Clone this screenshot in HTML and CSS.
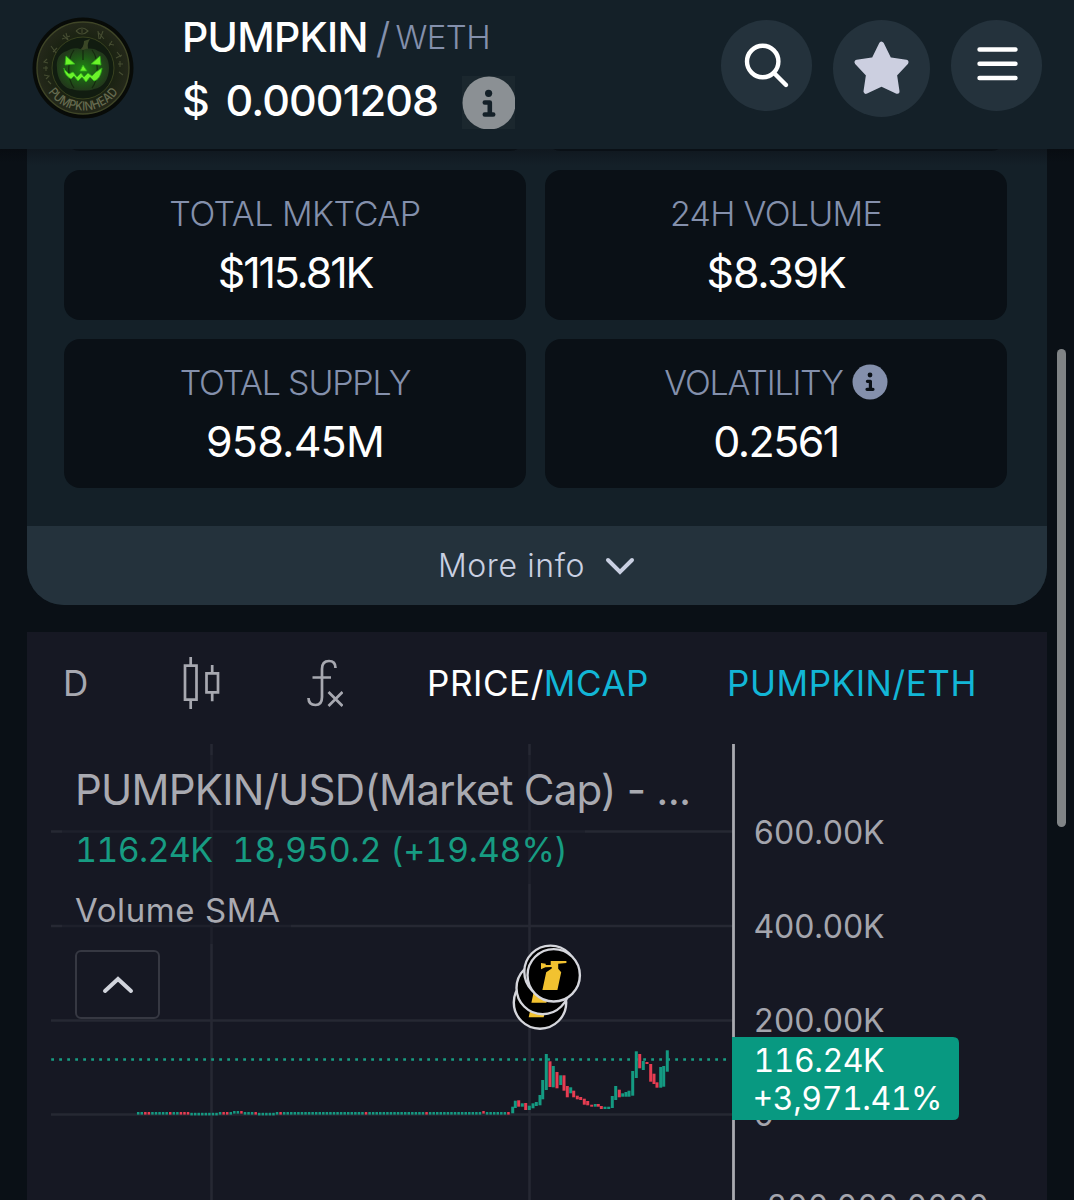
FILE: index.html
```html
<!DOCTYPE html>
<html lang="en">
  <head>
    <meta charset="UTF-8" />
    <meta name="viewport" content="width=device-width, initial-scale=1.0" />
    <title>PUMPKIN / WETH</title>
    <link rel="stylesheet" href="styles.css">
  </head>
  <body>
    <div class="header">
      <svg class="token-logo" viewBox="0 0 102 102">
        <defs>
          <radialGradient id="coin">
            <stop offset="0" stop-color="#1c3a12" />
            <stop offset="0.55" stop-color="#17200f" />
            <stop offset="1" stop-color="#24281a" />
          </radialGradient>
          <radialGradient id="pumpkin">
            <stop offset="0" stop-color="#1f8a12" />
            <stop offset="0.6" stop-color="#1f5717" />
            <stop offset="1" stop-color="#223a1b" />
          </radialGradient>
          <path id="nameArc" d="M13.5 71 A42.500 42.500 0 0 0 88.5 71" />
        </defs>
        <circle cx="51" cy="51" r="50.5" fill="#080b08" />
        <circle cx="51" cy="51" r="46" fill="url(#coin)" stroke="#3f4527" stroke-width="1.4" />
        <circle cx="51" cy="51" r="31" fill="#111c10" stroke="#39421f" stroke-width="1" />
        <g class="runes">
          <path d="M19 29l5 7M21 35l4-4M31 18l5 5M30 22l8-3M34 16l2 7M44 14q6-6 12 0q-6 6-12 0M50 12v4M66 14l1 8M66 15l6 7M71 14l-3 8M80 24l-3 5M82 28l-5-1M85 35l4 5M84 41l6-3M86 47h5M88 44v6M87 55l4 3M15 42l-3 3l4 1M11 51h5M14 49v5M12 58l5 1l-3 3M16 64l3 3" />
        </g>
        <path d="M47 33q5-2 5-9l6-2q-4 6-1 12z" fill="#3a4726" />
        <path d="M51 33c-6-3-12-2-16 1c-8 2-11 9-10 17c0 11 7 21 15 21c4 2 18 2 22 0c9-1 15-10 15-21c0-9-4-15-11-17c-5-3-10-3-15-1z" fill="url(#pumpkin)" />
        <path d="M42 33c-7 9-7 29 0 38M60 33c7 9 7 29 0 38M51 33v10" fill="none" stroke="#15290f" stroke-width="1.2" />
        <path class="face" d="M34 39l9 8l-10 1zM68 39l-9 8l10 1zM51 48l4 6h-7zM32 52l5 5l4-2l4 5l4-4l3 4l4-4l4 3l4-4l6-4c-1 8-4 12-8 13l-4-4l-4 5l-4-5l-4 4l-4-5l-3 3c-5-3-7-7-7-11z" />
        <text class="coin-name"><textPath href="#nameArc" startOffset="5" textLength="82" lengthAdjust="spacingAndGlyphs">PUMPKINHEAD</textPath></text>
      </svg>

      <div class="token-info">
        <div class="pair">
          <span class="base">PUMPKIN</span>
          <span class="slash">/</span>
          <span class="quote">WETH</span>
        </div>
        <div class="price-row">
          <span class="price">$ 0.0001208</span>
          <svg class="price-info" viewBox="0 0 53 53">
            <circle cx="27" cy="27" r="26.5" fill="#8b9094" />
            <circle cx="26.6" cy="17.3" r="3.6" fill="#142028" />
            <path d="M22.8 26.5h5v12M22.8 38.5h8.4" fill="none" stroke="#142028" stroke-width="4.6" stroke-linecap="round" stroke-linejoin="round" />
          </svg>
        </div>
      </div>

      <div class="actions">
        <button class="round-btn">
          <svg viewBox="0 0 91 91">
            <circle cx="41.7" cy="41.5" r="15.7" />
            <path d="M53 53l12 12" />
          </svg>
        </button>
        <button class="round-btn star-btn">
          <svg viewBox="0 0 97 97">
            <path d="M48.5 24.2L56.2 39.8L73 42.2L61.5 54.6L64 71.3L48.5 64L33 71.3L35.5 54.6L24 42.2L40.8 39.8z" />
          </svg>
        </button>
        <button class="round-btn">
          <svg viewBox="0 0 91 91">
            <path d="M28.5 29.5h36M28.5 43.7h36M28.5 58h36" />
          </svg>
        </button>
      </div>
    </div>

    <div class="content">
      <div class="info-card">
        <div class="stats">
          <div class="stat"></div>
          <div class="stat"></div>
          <div class="stat">
            <div class="label mktcap-label">TOTAL MKTCAP</div>
            <div class="value mktcap">$115.81K</div>
          </div>
          <div class="stat">
            <div class="label volume-label">24H VOLUME</div>
            <div class="value volume">$8.39K</div>
          </div>
          <div class="stat">
            <div class="label">TOTAL SUPPLY</div>
            <div class="value supply">958.45M</div>
          </div>
          <div class="stat">
            <div class="label">
              VOLATILITY
              <svg class="label-info" viewBox="0 0 36 36">
                <circle cx="18" cy="18" r="17.5" fill="#8490ac" />
                <circle cx="18" cy="11" r="2.4" fill="#0a1016" />
                <path d="M15.4 17.3h3v8M15 25.3h6" fill="none" stroke="#0a1016" stroke-width="3.2" stroke-linecap="round" stroke-linejoin="round" />
              </svg>
            </div>
            <div class="value volatility">0.2561</div>
          </div>
        </div>
        <div class="more-info">
          <span>More info</span>
          <svg viewBox="0 0 32 20"><path d="M4 4l12 12l12-12" /></svg>
        </div>
      </div>

      <div class="chart-card">
        <div class="toolbar">
          <span class="interval">D</span>
          <svg class="tool-icon candles-icon" viewBox="0 0 38 54">
            <path d="M3 9.7h11.5v34H3zM8.7 1v8.7M8.7 43.7v9.2M24.5 17.3h11.5v19H24.5zM30.2 9v8.3M30.2 36.3v9" />
          </svg>
          <svg class="tool-icon fx-icon" viewBox="0 0 38 48">
            <path d="M30.5 9q0-7-6.500-7q-7 0-7 8v28q0 8-6.500 8q-7 0-7-7M7.500 18.500h18.500M23.500 33l14 14M37.500 33l-14 14" />
          </svg>
          <span class="mode">PRICE/<span class="link">MCAP</span></span>
          <span class="link pair-link">PUMPKIN/ETH</span>
        </div>

        <div class="chart">
          <svg class="plot" viewBox="27 744 1020 456">
            <g class="grid">
              <path d="M51 831.5h682M51 926h682M51 1020.500h682M51 1114.500h682M211.500 744v456M529.500 744v456" />
            </g>
            <!-- legend rows dim the grid behind them -->
            <g class="legend-bg">
              <rect x="62" y="755" width="643" height="69" />
              <rect x="62" y="824" width="523" height="60" />
              <rect x="62" y="884" width="229" height="60" />
            </g>
            <path class="last-price" d="M51.200 1059.500H729" />
            <g id="candles"></g>

            <g class="markers">
              <g transform="translate(540 1002.500)"><circle r="26.200" /><use href="#bottle" /></g>
              <g transform="translate(542.700 988)"><circle r="26.200" /><use href="#bottle" /></g>
              <g transform="translate(550.500 971.800)"><circle r="26.200" /></g>
              <g transform="translate(553.700 975.300)">
                <circle r="26.200" />
                <path id="bottle" d="M-3-14.300H12.700V-12.300L4.500-11.500V-6.500L7.500-3L3.700 14.700H-11.300L-7.500-3L-2-6.800V-8.300L-8.300-8L-12.700-6V-12.300L-8-11.500V-10.300H-3z" />
              </g>
            </g>

            <path class="axis-line" d="M733.500 744v456" />
            <g class="axis">
              <text x="753.500" y="844" textLength="131">600.00K</text>
              <text x="753.500" y="937.500" textLength="131">400.00K</text>
              <text x="753.500" y="1031.500" textLength="131">200.00K</text>
              <text x="753.500" y="1126">0</text>
              <text x="746" y="1217.500" textLength="243">−200,000.0000</text>
            </g>
            <path class="tag" d="M732 1037h221q6 0 6 6v71q0 6-6 6H732z" />
            <g class="axis tag-text">
              <text x="753.500" y="1072" textLength="131">116.24K</text>
              <text x="752.500" y="1109.500" textLength="190">+3,971.41%</text>
            </g>
          </svg>

          <div class="legend">
            <div class="legend-title">PUMPKIN/USD(Market Cap) - ...</div>
            <div class="legend-values"><span>116.24K</span><span class="change">18,950.2 (+19.48%)</span></div>
            <div class="legend-study">Volume SMA</div>
            <button class="collapse">
              <svg viewBox="0 0 34 20"><path d="M4 16L17 4L30 16" /></svg>
            </button>
          </div>
        </div>
      </div>
    </div>

    <div class="scrollbar"></div>

    <script>
      const group = document.getElementById('candles');

      function addCandle(x, top, bottom, down, width) {
        const rect = document.createElementNS('http://www.w3.org/2000/svg', 'rect');
        rect.setAttribute('x', x - width / 2);
        rect.setAttribute('y', top);
        rect.setAttribute('width', width);
        rect.setAttribute('height', bottom - top);
        rect.setAttribute('class', down ? 'down' : 'up');
        group.appendChild(rect);
      }

      // quiet period before the first move
      const flatDown = [2, 3, 9, 12, 13, 14, 24, 25, 29, 33, 40, 64, 81, 97, 104];
      for (let i = 0; i < 105; i++) {
        let y = 1112;
        if ((i > 14 && i < 23) || (i > 33 && i < 39)) y = 1112.8;
        if (i > 26 && i < 30 || i === 97) y = 1111;
        addCandle(138.2 + i * 3.56, y, y + 2.6, flatDown.includes(i), 2.5);
      }

      // [x, top, bottom, down]
      const candles = [
        [512.7, 1106.7, 1113.3], [515.3, 1100.7, 1108], [518.7, 1100.3, 1106.7, 1],
        [522.3, 1103.3, 1106.7], [525.7, 1103, 1110, 1], [529.3, 1105.7, 1110],
        [533, 1103.3, 1108.3], [536.3, 1102, 1106], [540, 1095, 1105.3],
        [542.7, 1080, 1099.3], [546.3, 1054, 1090], [550, 1061.3, 1087, 1],
        [553.3, 1066, 1087.3], [557, 1072, 1088.3, 1], [560.7, 1075.3, 1085],
        [564, 1075.3, 1090.7, 1], [567.3, 1086, 1097.3, 1], [570.7, 1087.3, 1093.3],
        [573.7, 1090.7, 1097.3, 1], [577.3, 1095.7, 1099.3, 1], [580.7, 1097, 1100, 1],
        [584.3, 1098.7, 1104.7, 1], [587.7, 1101, 1105.3, 1], [591.7, 1104.7, 1106.7, 1],
        [595.3, 1104, 1106.7], [598.3, 1104, 1106.7, 1], [601.3, 1106, 1109, 1],
        [605, 1106.7, 1109], [608.7, 1106.7, 1109], [612.3, 1096, 1108],
        [615.7, 1086, 1100], [619.3, 1089.7, 1097.3, 1], [622.7, 1093.3, 1096.7],
        [626, 1092, 1096.7], [629, 1090.7, 1096.7], [632.7, 1071, 1095.7],
        [636.3, 1051.3, 1078], [639.7, 1054, 1068.3, 1], [643.3, 1061, 1070],
        [647, 1062, 1064, 1], [650.7, 1064, 1081.7, 1], [654, 1073.7, 1084, 1],
        [657, 1082.3, 1087.7, 1], [660.7, 1067, 1087.7], [663.7, 1066, 1086.7],
        [667.3, 1050.3, 1071.7]
      ];
      candles.forEach(([x, top, bottom, down]) => addCandle(x, top, bottom, down, 3));
    </script>
  </body>
</html>
```
FILE: styles.css
```css
* {
  box-sizing: border-box;
  margin: 0;
  padding: 0;
}

body {
  font-family: Inter, 'Liberation Sans', sans-serif;
  background: #0a1016;
  color: #ffffff;
  height: 1200px;
  overflow: hidden;
}

svg {
  display: block;
}

button {
  border: none;
  background: none;
}

.header {
  height: 149px;
  background: #142028;
  display: flex;
  align-items: flex-start;
  padding: 0 32px;
}

.token-logo {
  width: 102px;
  height: 102px;
  margin-top: 17px;
}

.runes path {
  fill: none;
  stroke: #454c31;
  stroke-width: 1.1;
}

.face {
  fill: #6bf32a;
  stroke: #2fae1a;
  stroke-width: 0.8;
}

.coin-name {
  font-size: 12.5px;
  font-weight: 500;
  fill: #666b50;
}

.token-info {
  margin-left: 48px;
}

.pair {
  height: 74px;
  display: flex;
  align-items: center;
}

.base {
  font-size: 41px;
  font-weight: 500;
  letter-spacing: -0.7px;
}

.slash {
  margin-left: 8px;
  font-size: 42px;
  font-weight: 300;
  color: #8490ac;
}

.quote {
  margin-left: 5px;
  font-size: 33px;
  font-weight: 300;
  letter-spacing: -0.6px;
  color: #8490ac;
}

.price-row {
  display: flex;
  align-items: flex-start;
  margin-top: 2px;
}

.price {
  width: 280px;
  font-size: 43px;
  font-weight: 500;
  line-height: 49px;
  letter-spacing: -0.9px;
  word-spacing: 6px;
  white-space: nowrap;
}

.price-info {
  width: 53px;
  height: 53px;
  background: #1b272e;
}

.actions {
  display: flex;
  align-items: flex-start;
  gap: 21px;
  margin: 20px 0 0 auto;
}

.round-btn {
  width: 91px;
  height: 91px;
  border-radius: 50%;
  background: #24323c;
}

.round-btn path,
.round-btn circle {
  fill: none;
  stroke: #ffffff;
  stroke-width: 4.4;
  stroke-linecap: round;
}

.star-btn {
  width: 97px;
  height: 97px;
}

.round-btn.star-btn path {
  fill: #cccfe0;
  stroke: #cccfe0;
  stroke-width: 5;
  stroke-linejoin: round;
}

.content {
  height: 1051px;
  padding: 0 27px;
  overflow: hidden;
  background: linear-gradient(rgba(6, 9, 13, 0.5), rgba(6, 9, 13, 0) 14px);
}

.info-card {
  background: linear-gradient(#10181f, #142028 16px);
  border-radius: 0 0 37px 37px;
  overflow: hidden;
}

.stats {
  display: grid;
  grid-template-columns: 1fr 1fr;
  grid-auto-rows: 149.5px;
  gap: 19px;
  margin-top: -147.5px;
  padding: 0 40px 38px 37px;
}

.stat {
  padding-top: 18px;
  background: #0a1016;
  border-radius: 16px;
  text-align: center;
}

.label {
  display: flex;
  align-items: center;
  justify-content: center;
  height: 51px;
  font-size: 34px;
  font-weight: 300;
  letter-spacing: -1.2px;
  color: #8490ac;
}

.mktcap-label {
  letter-spacing: -0.5px;
}

.volume-label {
  letter-spacing: -0.7px;
}

.label-info {
  width: 36px;
  height: 36px;
  margin-left: 9px;
}

.value {
  font-size: 43px;
  line-height: 66px;
}

.mktcap {
  letter-spacing: -2.2px;
}

.volume {
  letter-spacing: -1.3px;
}

.supply {
  letter-spacing: -0.8px;
}

.volatility {
  letter-spacing: -1.6px;
}

.more-info {
  height: 79px;
  display: flex;
  align-items: center;
  justify-content: center;
  gap: 19px;
  background: #24323c;
  color: #c9d0e2;
  font-size: 32px;
  font-weight: 300;
  letter-spacing: 0.6px;
}

.more-info svg {
  width: 32px;
  height: 20px;
}

.more-info path,
.collapse path {
  fill: none;
  stroke: #c9d0e2;
  stroke-width: 4;
  stroke-linecap: round;
}

.chart-card {
  height: 568px;
  margin-top: 27px;
  background: #161823;
}

.toolbar {
  height: 112px;
  padding: 0 0 11px 36px;
  display: flex;
  align-items: center;
  font-size: 35px;
  letter-spacing: 0.55px;
}

.interval {
  width: 119px;
  color: #a7a8b0;
}

.tool-icon {
  fill: none;
  stroke: #a7a8b0;
  stroke-width: 2.7;
}

.candles-icon {
  width: 38px;
  height: 54px;
}

.fx-icon {
  width: 38px;
  height: 48px;
  margin-left: 85px;
}

.mode {
  width: 300px;
  margin-left: 84px;
}

.link {
  color: #12b6d6;
}

.chart {
  position: relative;
}

.plot {
  width: 1020px;
  height: 456px;
}

.grid path {
  fill: none;
  stroke: #262833;
  stroke-width: 2.6;
}

.legend-bg rect {
  fill: #161823;
  opacity: 0.5;
}

.last-price {
  stroke: #179c82;
  stroke-width: 2.6;
  stroke-dasharray: 2.8 5.2;
}

.up {
  fill: #149a82;
}

.down {
  fill: #e63d52;
}

.markers circle {
  fill: #000000;
  stroke: #d5d6dc;
  stroke-width: 2.4;
}

.markers path,
.markers use {
  fill: #f2c230;
}

.axis-line {
  stroke: #a9aab0;
  stroke-width: 2.8;
}

.axis {
  font-size: 32px;
  font-variant-numeric: tabular-nums;
  fill: #a4a5ad;
}

.tag {
  fill: #089981;
}

.tag-text {
  fill: #ffffff;
}

/* sits on top of the plot */
.legend {
  position: absolute;
  top: 16px;
  left: 48px;
  color: #a9aab1;
  white-space: nowrap;
}

.legend-title {
  font-size: 42px;
  line-height: 60px;
  letter-spacing: -0.75px;
}

.legend-values {
  display: flex;
  gap: 20px;
  font-size: 34px;
  line-height: 60px;
  letter-spacing: -0.7px;
  font-variant-numeric: tabular-nums;
  color: #179c82;
}

.change {
  letter-spacing: -0.2px;
}

.legend-study {
  font-size: 33px;
  line-height: 60px;
  letter-spacing: 0.6px;
}

.collapse {
  display: flex;
  align-items: center;
  justify-content: center;
  width: 85px;
  height: 69px;
  margin-top: 10px;
  border: 2.5px solid #363842;
  border-radius: 6px;
}

.collapse svg {
  width: 34px;
  height: 20px;
}

.collapse path {
  stroke: #d1d4dc;
}

.scrollbar {
  position: fixed;
  top: 349px;
  left: 1057px;
  width: 9px;
  height: 478px;
  border-radius: 5px;
  background: #808486;
}
```
